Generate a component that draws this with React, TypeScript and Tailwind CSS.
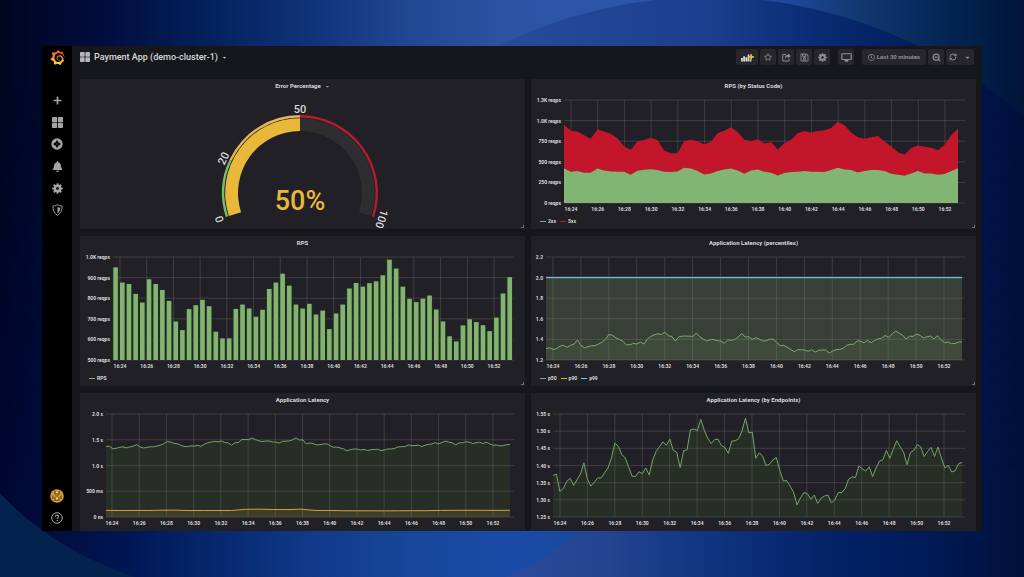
import type { ReactNode } from 'react';
import { RefreshCw, ZoomOut } from 'lucide-react';
import { FaBell, FaCaretDown, FaPlus, FaRegClock, FaRegSave, FaRegStar } from 'react-icons/fa';
import { SiGrafana } from 'react-icons/si';

const GREEN = '#7eb26d';
const YELLOW = '#eab839';
const RED = '#c4162a';
const BLUE = '#6ed0e0';

const TIMES = [
  '16:24', '16:26', '16:28', '16:30', '16:32', '16:34', '16:36', '16:38',
  '16:40', '16:42', '16:44', '16:46', '16:48', '16:50', '16:52',
];

// one sample every 30 seconds
const rps = [
  950, 876, 869, 821, 779, 892, 869, 840, 787, 687, 645, 747, 766, 792, 761, 637, 605, 605, 748, 769,
  750, 710, 744, 845, 876, 919, 861, 769, 750, 773, 721, 740, 650, 726, 769, 847, 874, 856, 873, 882,
  911, 987, 944, 856, 797, 781, 798, 813, 745, 687, 615, 590, 668, 698, 684, 669, 640, 706, 823, 902,
];

const rpsOk = [
  423, 379, 387, 367, 367, 419, 395, 383, 379, 379, 343, 391, 403, 411, 399, 379, 375, 383, 427, 419,
  387, 347, 359, 387, 407, 419, 395, 355, 395, 407, 379, 367, 335, 363, 375, 379, 387, 379, 379, 375,
  399, 427, 407, 399, 371, 387, 399, 399, 387, 355, 343, 330, 359, 387, 359, 359, 343, 351, 387, 423,
];

// one sample every 15 seconds
const latency = [
  1.371, 1.375, 1.325, 1.333, 1.354, 1.363, 1.342, 1.359, 1.375, 1.408, 1.361, 1.34, 1.351, 1.364, 1.364,
  1.379, 1.393, 1.422, 1.465, 1.456, 1.432, 1.422, 1.396, 1.369, 1.368, 1.382, 1.376, 1.393, 1.372, 1.416,
  1.441, 1.455, 1.469, 1.459, 1.477, 1.444, 1.439, 1.394, 1.443, 1.446, 1.504, 1.506, 1.502, 1.534, 1.503,
  1.48, 1.464, 1.475, 1.477, 1.458, 1.453, 1.435, 1.471, 1.472, 1.478, 1.501, 1.538, 1.495, 1.497, 1.421,
  1.437, 1.427, 1.4, 1.404, 1.417, 1.423, 1.386, 1.355, 1.356, 1.34, 1.322, 1.285, 1.306, 1.321, 1.318,
  1.302, 1.314, 1.29, 1.305, 1.311, 1.314, 1.291, 1.3, 1.321, 1.321, 1.332, 1.36, 1.367, 1.365, 1.399,
  1.39, 1.384, 1.396, 1.368, 1.393, 1.413, 1.417, 1.444, 1.421, 1.448, 1.472, 1.454, 1.439, 1.402, 1.438,
  1.444, 1.461, 1.454, 1.426, 1.441, 1.453, 1.426, 1.454, 1.422, 1.393, 1.4, 1.381, 1.385, 1.405, 1.409,
];

const p50 = [
  1.31, 1.319, 1.303, 1.31, 1.335, 1.342, 1.323, 1.342, 1.355, 1.394, 1.342, 1.319, 1.329, 1.339, 1.339,
  1.355, 1.371, 1.4, 1.448, 1.439, 1.416, 1.4, 1.381, 1.348, 1.348, 1.361, 1.355, 1.374, 1.355, 1.403,
  1.429, 1.445, 1.455, 1.448, 1.471, 1.435, 1.429, 1.384, 1.426, 1.432, 1.432, 1.432, 1.429, 1.461, 1.426,
  1.403, 1.384, 1.397, 1.4, 1.387, 1.384, 1.361, 1.397, 1.39, 1.4, 1.423, 1.458, 1.423, 1.426, 1.4,
  1.416, 1.403, 1.384, 1.387, 1.403, 1.403, 1.371, 1.339, 1.342, 1.323, 1.303, 1.281, 1.3, 1.3, 1.297,
  1.284, 1.3, 1.277, 1.294, 1.297, 1.297, 1.268, 1.287, 1.3, 1.303, 1.313, 1.342, 1.352, 1.352, 1.387,
  1.381, 1.368, 1.39, 1.368, 1.39, 1.406, 1.41, 1.439, 1.419, 1.452, 1.481, 1.461, 1.442, 1.403, 1.432,
  1.429, 1.452, 1.439, 1.413, 1.426, 1.432, 1.406, 1.435, 1.397, 1.368, 1.377, 1.358, 1.361, 1.374, 1.377,
];

const dbLatency = [
  0.13, 0.126, 0.128, 0.127, 0.132, 0.134, 0.125, 0.127, 0.126, 0.126, 0.15, 0.152, 0.145, 0.144, 0.152,
  0.128, 0.126, 0.122, 0.12, 0.121, 0.119, 0.121, 0.122, 0.123, 0.128, 0.13, 0.131, 0.13, 0.129, 0.13,
];

const TOP = 7;
const BOTTOM = 110;
const RIGHT = 434;

interface Scale {
  left: number;
  end: number;
  min: number;
  max: number;
}

function toPoints(data: number[], { left, end, min, max }: Scale) {
  return data.map((value, i) => {
    const x = left + (i * (end - left)) / (data.length - 1);
    const y = BOTTOM - ((value - min) / (max - min)) * (BOTTOM - TOP);
    return `${x.toFixed(2)},${y.toFixed(2)}`;
  });
}

function linePath(data: number[], scale: Scale) {
  return `M${toPoints(data, scale).join('L')}`;
}

function areaPath(data: number[], scale: Scale) {
  return `${linePath(data, scale)}L${scale.end},${BOTTOM}L${scale.left},${BOTTOM}Z`;
}

interface ChartProps {
  label: string;
  left: number;
  firstTick: number;
  lastTick: number;
  yLabels: string[];
  children: ReactNode;
}

const Chart = ({ label, left, firstTick, lastTick, yLabels, children }: ChartProps) => {
  const step = (lastTick - firstTick) / (TIMES.length - 1);
  const rowHeight = (BOTTOM - TOP) / (yLabels.length - 1);

  return (
    <svg viewBox="0 0 445 120" role="img" aria-label={label} className="block w-full">
      <g stroke="#c8c8c8" strokeOpacity="0.17">
        {yLabels.map((text, i) => (
          <line key={text} x1={left} x2={RIGHT} y1={TOP + i * rowHeight} y2={TOP + i * rowHeight} />
        ))}
        {TIMES.map((time, i) => (
          <line key={time} x1={firstTick + i * step} x2={firstTick + i * step} y1={TOP} y2={BOTTOM} />
        ))}
      </g>
      {children}
      <g className="fill-[#d8d9da] text-[5px] font-bold">
        {yLabels.map((text, i) => (
          <text key={text} x={left - 3} y={TOP + i * rowHeight + 2} textAnchor="end">{text}</text>
        ))}
        {TIMES.map((time, i) => (
          <text key={time} x={firstTick + i * step} y={118} textAnchor="middle">{time}</text>
        ))}
      </g>
    </svg>
  );
};

interface PanelProps {
  title: string;
  menu?: boolean;
  legend?: { name: string; color: string }[];
  children: ReactNode;
}

const Panel = ({ title, menu, legend, children }: PanelProps) => (
  <section className="relative min-w-0 bg-[#212026]">
    <h2 className="flex h-[14px] items-center justify-center gap-1 text-[6px] font-bold text-[#d8d9da]">
      {title}
      {menu && (
        <button type="button" aria-label="Panel menu">
          <FaCaretDown className="size-[5px] text-[#9a9b9f]" />
        </button>
      )}
    </h2>
    {children}
    {legend && (
      <ul className="flex h-4 items-center gap-1 pl-[9px] text-[5px] font-bold text-[#d8d9da]">
        {legend.map((item) => (
          <li key={item.name} className="flex items-center gap-[2px]">
            <span className="h-px w-[6px]" style={{ backgroundColor: item.color }} />
            {item.name}
          </li>
        ))}
      </ul>
    )}
    {(legend || menu) && (
      <span className="absolute right-px bottom-px size-[3px] border-r border-b border-[#6b6c70]" />
    )}
  </section>
);

const CX = 220;
const CY = 100;

// percent 0..100 over a 216 degree sweep
function polar(percent: number, r: number) {
  const angle = ((198 - percent * 2.16) * Math.PI) / 180;
  return `${(CX + r * Math.cos(angle)).toFixed(2)} ${(CY - r * Math.sin(angle)).toFixed(2)}`;
}

function ring(from: number, to: number, inner: number, outer: number) {
  const large = (to - from) * 2.16 > 180 ? 1 : 0;
  return `M${polar(from, outer)}A${outer} ${outer} 0 ${large} 1 ${polar(to, outer)}L${polar(to, inner)}A${inner} ${inner} 0 ${large} 0 ${polar(from, inner)}Z`;
}

const Gauge = () => (
  <svg viewBox="0 0 445 136" role="img" aria-label="Error percentage: 50%" className="block w-full">
    <path d={ring(0, 100, 62, 74.8)} fill="#2e2e31" />
    <path d={ring(0, 50, 62, 74.8)} fill={YELLOW} />
    <path d={ring(0, 20, 75.6, 78)} fill="#73bf69" />
    <path d={ring(20, 50, 75.6, 78)} fill="#e3b554" />
    <path d={ring(50, 100, 75.6, 78)} fill="#b81a2e" />
    <g className="fill-[#d8d9da] text-[11px] font-medium" textAnchor="middle">
      <text x="220" y="20">50</text>
      <text transform="translate(147 67) rotate(-65)">20</text>
      <text transform="translate(143 125) rotate(-108)">0</text>
      <text transform="translate(298 125) rotate(108)">100</text>
    </g>
    <text x="220" y="117" textAnchor="middle" className="text-[27px] font-medium" fill={YELLOW}>50%</text>
  </svg>
);

const AppsIcon = ({ className }: { className: string }) => (
  <svg viewBox="0 0 12 12" fill="currentColor" className={className} aria-hidden="true">
    <rect width="5.6" height="5.6" rx="0.8" />
    <rect x="6.4" width="5.6" height="5.6" rx="0.8" />
    <rect y="6.4" width="5.6" height="5.6" rx="0.8" />
    <rect x="6.4" y="6.4" width="5.6" height="5.6" rx="0.8" />
  </svg>
);

const GearIcon = ({ className }: { className: string }) => (
  <svg viewBox="0 0 16 16" fill="currentColor" className={className} aria-hidden="true">
    {[0, 45, 90, 135].map((angle) => (
      <rect key={angle} x="6.5" y="0.3" width="3" height="15.4" rx="0.7" transform={`rotate(${angle} 8 8)`} />
    ))}
    <circle cx="8" cy="8" r="5.6" />
    <circle cx="8" cy="8" r="2.1" fill="#111" />
  </svg>
);

const CompassIcon = () => (
  <svg viewBox="0 0 12 12" className="size-[12px]" aria-hidden="true">
    <circle cx="6" cy="6" r="5.7" fill="currentColor" />
    <path d="M6 2 7.6 4.4 10 6 7.6 7.6 6 10 4.4 7.6 2 6 4.4 4.4Z" fill="#000" />
    <circle cx="6" cy="6" r="0.8" fill="#555" />
  </svg>
);

const ShieldIcon = () => (
  <svg viewBox="0 0 12 13" className="h-[12px] w-[11px]" fill="none" stroke="currentColor" aria-hidden="true">
    <path d="M6 .9C7.6 1.8 9.3 2.2 11 2.2 11 7 9.6 10.3 6 12.2 2.4 10.3 1 7 1 2.2 2.7 2.2 4.4 1.8 6 .9Z" />
    <path d="M6 3.2C7.2 3.8 8 4 9 4.1 8.9 6.8 8 8.9 6 10.2Z" fill="currentColor" stroke="none" />
  </svg>
);

const ShareIcon = () => (
  <svg viewBox="0 0 14 13" className="size-[9px]" fill="none" stroke="currentColor" aria-hidden="true">
    <path d="M6.2 2H2.8Q1 2 1 3.8v6.4Q1 12 2.8 12h6.4q1.8 0 1.8-1.8V8.6" strokeWidth="1.6" />
    <path d="M9.3.3 13.8 4 9.3 7.7V5.4C7 5.4 5.8 6.1 5.3 8.9 3.6 5.3 5.4 2.6 9.3 2.6Z" fill="currentColor" stroke="none" />
  </svg>
);

const MonitorIcon = () => (
  <svg viewBox="0 0 12 10" className="h-[9px] w-[11px]" fill="none" stroke="currentColor" aria-hidden="true">
    <rect x="0.8" y="0.8" width="10.4" height="6.4" rx="0.6" strokeWidth="1.3" />
    <path d="M3.6 9.6h4.8L7.2 7.2H4.8Z" fill="currentColor" stroke="none" />
  </svg>
);

const AddPanelIcon = () => (
  <svg viewBox="0 0 13 9" className="h-[9px] w-[13px]" aria-hidden="true">
    <path d="M0 5h1.8v3.5H0ZM2.2 3.2h1.8v5.3H2.2ZM4.4 4.2h1.8v4.3H4.4ZM6.6 1.6h1.8v6.9H6.6Z" fill="#d8d9da" />
    <path d="M8.8 6.4h1.6v2.1H8.8Z" fill="#d8d9da" />
    <path d="M9.2 1.2H11v1.7h1.8v1.8H11v1.7H9.2V4.7H7.6V2.9h1.6Z" fill={YELLOW} />
  </svg>
);

const Avatar = () => (
  <svg viewBox="0 0 14 14" className="size-[14px]" aria-hidden="true">
    <circle cx="7" cy="7" r="6.8" fill="#d39d3c" />
    <g fill="#6b4a1a">
      <path d="M4.2 1.8h1.3v3.4H4.2ZM8.5 1.8h1.3v3.4H8.5Z" />
      <path d="M4.7 4.6h4.6v1H4.7ZM2.3 6.6h1.2v3.4H2.3ZM10.5 6.6h1.2v3.4h-1.2ZM5.2 6.6h3.6v.9H5.2ZM4.4 8.2h1.2v3.6H4.4ZM8.4 8.2h1.2v3.6H8.4ZM5.6 10.9h2.8v.9H5.6Z" />
    </g>
    <path d="M6 2.8h2v1.2H6ZM6.2 8.8h1.6V10H6.2Z" fill="#f6dc8f" />
  </svg>
);

const HelpIcon = () => (
  <svg viewBox="0 0 12 12" className="size-3" fill="none" stroke="currentColor" aria-hidden="true">
    <circle cx="6" cy="6" r="5.3" />
    <path d="M4.4 4.7C4.4 3.6 5.1 3.1 6 3.1S7.6 3.7 7.6 4.6C7.6 5.7 6.1 5.7 6.1 7" strokeWidth="1.1" />
    <circle cx="6.1" cy="8.6" r="0.4" fill="currentColor" strokeWidth="0.5" />
  </svg>
);

const Backdrop = () => (
  <svg viewBox="0 0 1024 577" preserveAspectRatio="none" className="absolute inset-0 size-full" aria-hidden="true">
    <defs>
      <linearGradient id="sky" gradientUnits="userSpaceOnUse" x1="0" x2="1024">
        <stop offset="0" stopColor="#00051f" />
        <stop offset="0.1" stopColor="#010d3d" />
        <stop offset="0.2" stopColor="#03205a" />
        <stop offset="0.3" stopColor="#0f3279" />
        <stop offset="0.4" stopColor="#214893" />
        <stop offset="0.5" stopColor="#2c54a3" />
        <stop offset="0.62" stopColor="#2c56aa" />
        <stop offset="0.77" stopColor="#1f489a" />
        <stop offset="0.84" stopColor="#12386f" />
        <stop offset="0.92" stopColor="#032656" />
        <stop offset="1" stopColor="#001538" />
      </linearGradient>
      <linearGradient id="orb" gradientUnits="userSpaceOnUse" x1="497" x2="1024">
        <stop offset="0" stopColor="#264c9c" />
        <stop offset="0.4" stopColor="#1b3f8e" />
        <stop offset="0.6" stopColor="#0a2c74" />
        <stop offset="0.8" stopColor="#001d58" />
        <stop offset="1" stopColor="#000f3c" />
      </linearGradient>
      <linearGradient id="floor" gradientUnits="userSpaceOnUse" x1="0" x2="1024">
        <stop offset="0" stopColor="#000630" />
        <stop offset="0.12" stopColor="#001652" />
        <stop offset="0.2" stopColor="#06256b" />
        <stop offset="0.3" stopColor="#0f3a88" />
        <stop offset="0.4" stopColor="#17469a" />
        <stop offset="0.5" stopColor="#1a4ba6" />
        <stop offset="0.6" stopColor="#1a4698" />
        <stop offset="0.8" stopColor="#04236a" />
        <stop offset="0.9" stopColor="#001b58" />
        <stop offset="1" stopColor="#00103a" />
      </linearGradient>
      <linearGradient id="fade" gradientUnits="userSpaceOnUse" x1="0" x2="0" y1="90" y2="480">
        <stop offset="0" stopColor="#000" />
        <stop offset="1" stopColor="#fff" />
      </linearGradient>
      <mask id="rise">
        <rect width="1024" height="577" fill="url(#fade)" />
      </mask>
      <linearGradient id="glow" gradientUnits="userSpaceOnUse" x1="505" x2="800">
        <stop offset="0" stopColor="#2c4a9c" />
        <stop offset="0.35" stopColor="#23448f" />
        <stop offset="1" stopColor="#04236a" stopOpacity="0" />
      </linearGradient>
    </defs>
    <rect width="1024" height="577" fill="url(#sky)" />
    <circle cx="708" cy="472" r="475" fill="url(#orb)" />
    <rect width="1024" height="577" fill="url(#floor)" mask="url(#rise)" />
    <path d="M590 525Q548 560 505 577H1024V525Z" fill="url(#glow)" />
    <path d="M0 493Q50 548 135 577H0Z" fill="#03234e" />
  </svg>
);

const navItems = [
  { label: 'Create', icon: <FaPlus className="size-[9px]" /> },
  { label: 'Dashboards', icon: <AppsIcon className="size-[11px]" /> },
  { label: 'Explore', icon: <CompassIcon /> },
  { label: 'Alerting', icon: <FaBell className="size-[11px]" /> },
  { label: 'Configuration', icon: <GearIcon className="size-[11px]" /> },
  { label: 'Server Admin', icon: <ShieldIcon /> },
];

const Sidebar = () => (
  <nav className="flex w-[30px] shrink-0 flex-col items-center bg-black text-[#a3a4a8]">
    <a href="#" aria-label="Home" className="flex h-[22px] items-center">
      <svg className="size-0" aria-hidden="true">
        <defs>
          <linearGradient id="flame" x1="0" y1="1" x2="0" y2="0">
            <stop offset="0" stopColor="#fcdf3a" />
            <stop offset="0.5" stopColor="#f4953a" />
            <stop offset="1" stopColor="#ee4b33" />
          </linearGradient>
        </defs>
      </svg>
      <SiGrafana className="size-[15px] fill-[url(#flame)]" />
    </a>
    <ul className="mt-[21px]">
      {navItems.map((item) => (
        <li key={item.label}>
          <a href="#" aria-label={item.label} className="flex h-[22px] w-[30px] items-center justify-center">
            {item.icon}
          </a>
        </li>
      ))}
    </ul>
    <a href="#" aria-label="Profile" className="mt-auto flex h-[22px] items-center"><Avatar /></a>
    <a href="#" aria-label="Help" className="mb-[2px] flex h-[22px] items-center"><HelpIcon /></a>
  </nav>
);

const ToolButton = ({ label, wide, children }: { label: string; wide?: boolean; children: ReactNode }) => (
  <button
    type="button"
    aria-label={label}
    className={`flex h-4 items-center justify-center rounded-xs bg-[#27262b] ${wide ? 'w-[22px]' : 'w-4'}`}
  >
    {children}
  </button>
);

const Toolbar = () => (
  <header className="flex h-[33px] items-start justify-between pt-[3px] pr-[2px]">
    <button type="button" className="flex h-4 items-center gap-1 text-[9px] font-medium text-[#d8d9da]">
      <AppsIcon className="size-[10px] text-[#b4b5b9]" />
      <h1>Payment App (demo-cluster-1)</h1>
      <FaCaretDown className="size-[5px]" />
    </button>
    <div className="flex gap-[2px] text-[#8e8f94]">
      <ToolButton label="Add panel" wide><AddPanelIcon /></ToolButton>
      <ToolButton label="Mark as favorite"><FaRegStar className="size-2" /></ToolButton>
      <ToolButton label="Share dashboard"><ShareIcon /></ToolButton>
      <ToolButton label="Save dashboard"><FaRegSave className="size-[9px]" /></ToolButton>
      <ToolButton label="Dashboard settings"><GearIcon className="size-[9px]" /></ToolButton>
      <div className="mx-[6px]">
        <ToolButton label="Cycle view mode"><MonitorIcon /></ToolButton>
      </div>
      <button type="button" className="flex h-4 w-16 items-center justify-center gap-[2px] rounded-xs bg-[#27262b] text-[6px] font-bold">
        <FaRegClock className="size-[7px]" />
        Last 30 minutes
      </button>
      <ToolButton label="Zoom out"><ZoomOut className="size-[9px]" strokeWidth={3} /></ToolButton>
      <div className="flex rounded-xs bg-[#27262b]">
        <button type="button" aria-label="Refresh" className="flex h-4 w-[14px] items-center justify-center">
          <RefreshCw className="size-2" strokeWidth={3} />
        </button>
        <button type="button" aria-label="Refresh interval" className="flex h-4 w-[14px] items-center justify-center">
          <FaCaretDown className="size-[7px]" />
        </button>
      </div>
    </div>
  </header>
);

const statusScale = { left: 33, end: 427, min: 0, max: 1250 };
const percentileScale = { left: 15, end: 431, min: 1.2, max: 2.2 };
const latencyScale = { left: 26, end: 430, min: 0, max: 2 };
const endpointScale = { left: 22, end: 431, min: 1.25, max: 1.55 };

export default function App() {
  return (
    <div className="relative flex h-screen bg-[#00103a] px-[42px] py-[46px] font-[Roboto,sans-serif] leading-none">
      <Backdrop />
      <div className="relative flex min-w-0 flex-1 overflow-hidden bg-[#15171a]">
        <Sidebar />
        <main className="flex min-w-0 flex-1 flex-col pr-[6px] pl-2">
          <Toolbar />
          <div className="grid flex-1 grid-cols-2 grid-rows-[auto_auto_1fr] gap-x-[6px] gap-y-[7px]">
            <Panel title="Error Percentage" menu>
              <Gauge />
            </Panel>

            <Panel title="RPS (by Status Code)" legend={[{ name: '2xx', color: GREEN }, { name: '5xx', color: RED }]}>
              <Chart
                label="Requests per second by status code"
                left={33}
                firstTick={40}
                lastTick={414}
                yLabels={['1.3K reqps', '1.0K reqps', '750 reqps', '500 reqps', '250 reqps', '0 reqps']}
              >
                <path d={areaPath(rps, statusScale)} fill={RED} />
                <path d={areaPath(rpsOk, statusScale)} fill="#82b473" />
              </Chart>
            </Panel>

            <Panel title="RPS" legend={[{ name: 'RPS', color: GREEN }]}>
              <Chart
                label="Requests per second"
                left={33}
                firstTick={40}
                lastTick={414}
                yLabels={['1.0K reqps', '900 reqps', '800 reqps', '700 reqps', '600 reqps', '500 reqps']}
              >
                {rps.map((value, i) => {
                  const height = ((value - 500) / 500) * (BOTTOM - TOP);
                  return (
                    <g key={i}>
                      <rect x={32.6 + i * 6.68} y={BOTTOM - height} width="6" height={height} fill="#22321f" />
                      <rect x={33.3 + i * 6.68} y={BOTTOM - height} width="4.6" height={height} fill="#82b370" />
                    </g>
                  );
                })}
              </Chart>
            </Panel>

            <Panel
              title="Application Latency (percentiles)"
              legend={[{ name: 'p50', color: '#8f9d8c' }, { name: 'p90', color: YELLOW }, { name: 'p99', color: BLUE }]}
            >
              <Chart
                label="Application latency percentiles"
                left={15}
                firstTick={22}
                lastTick={413}
                yLabels={['2.2', '2.0', '1.8', '1.6', '1.4', '1.2']}
              >
                <path d={areaPath([2, 2], percentileScale)} fill="#819c6a" fillOpacity="0.25" />
                <path d={areaPath(p50, percentileScale)} fill={GREEN} fillOpacity="0.1" />
                <path d={linePath(p50, percentileScale)} fill="none" stroke="#7da873" />
                <path d={linePath([2, 2], percentileScale)} stroke="#2c6b78" strokeWidth="2" />
                <path d={linePath([2, 2], percentileScale)} stroke="#74c3d3" />
              </Chart>
            </Panel>

            <Panel title="Application Latency">
              <Chart
                label="Application latency"
                left={26}
                firstTick={32}
                lastTick={413}
                yLabels={['2.0 s', '1.5 s', '1.0 s', '500 ms', '0 ns']}
              >
                <path d={areaPath(latency, latencyScale)} fill="#4a7a2a" fillOpacity="0.16" />
                <path d={areaPath(dbLatency, latencyScale)} fill={YELLOW} fillOpacity="0.12" />
                <path d={linePath(latency, latencyScale)} fill="none" stroke="#76a568" />
                <path d={linePath(dbLatency, latencyScale)} fill="none" stroke="#cfa43a" />
              </Chart>
            </Panel>

            <Panel title="Application Latency (by Endpoints)">
              <Chart
                label="Application latency by endpoints"
                left={22}
                firstTick={29}
                lastTick={413}
                yLabels={['1.55 s', '1.50 s', '1.45 s', '1.40 s', '1.35 s', '1.30 s', '1.25 s']}
              >
                <path d={areaPath(latency, endpointScale)} fill="#4a7a2a" fillOpacity="0.16" />
                <path d={linePath(latency, endpointScale)} fill="none" stroke="#76a568" />
              </Chart>
            </Panel>
          </div>
        </main>
      </div>
    </div>
  );
}
